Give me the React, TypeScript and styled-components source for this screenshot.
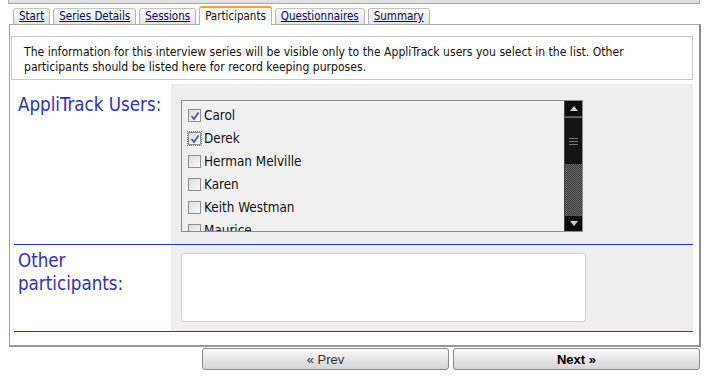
import React from "react";
import styled, { createGlobalStyle } from "styled-components";

const Global = createGlobalStyle`
  html, body { margin: 0; padding: 0; background: #fff; }
  body { font-family: Tahoma, "DejaVu Sans", "Liberation Sans", sans-serif; }
`;

const Page = styled.div`
  width: 708px;
  height: 377px;
  overflow: hidden;
  position: relative;
`;

const TopStrip = styled.div`
  margin: 0 8px 0 8px;
  height: 3px;
  background: linear-gradient(#e8e8e8, #d8d8d8);
  border: 1px solid #aaa;
  border-top: none;
`;

const TabRow = styled.div`
  display: flex;
  align-items: flex-end;
  gap: 3px;
  margin-left: 13px;
  height: 20px;
`;

const Tab = styled.div<{ $active?: boolean }>`
  height: ${(p) => (p.$active ? "19px" : "16px")};
  padding: 0 5px;
  box-sizing: border-box;
  border: 1px solid #b4b4b4;
  border-bottom: none;
  border-top: ${(p) => (p.$active ? "2px solid #f3a32a" : "1px solid #c4c4c4")};
  border-radius: 3px 3px 0 0;
  background: ${(p) => (p.$active ? "#fff" : "linear-gradient(#fafafa, #e6e6e6)")};
  font-family: "DejaVu Sans Condensed", "Liberation Sans", sans-serif;
  font-size: 11.5px;
  line-height: ${(p) => (p.$active ? "17px" : "15px")};
  color: ${(p) => (p.$active ? "#111" : "#0a0a6a")};
  text-decoration: ${(p) => (p.$active ? "none" : "underline")};
  margin-bottom: ${(p) => (p.$active ? "-1px" : "0")};
  position: relative;
  white-space: nowrap;
`;

const Panel = styled.div`
  margin-left: 9px;
  width: 692px;
  box-sizing: border-box;
  border-top: 1px solid #aaa;
  border-left: 1px solid #a0a0a0;
  border-right: 2px solid #8c8c8c;
  border-bottom: 2px solid #999;
  padding: 11px 6px 13px 1px;
`;

const InfoBox = styled.div`
  border: 1px solid #c8c8c8;
  padding: 8px 12px 6px 12px;
  height: 44px;
  box-sizing: border-box;
  font-family: "DejaVu Sans Condensed", "Liberation Sans", sans-serif;
  font-size: 12.1px;
  line-height: 15px;
  color: #111;
  white-space: nowrap;
`;

const Form = styled.div`
  margin: 4px 0 0 3px;
`;

const Row = styled.div<{ $h: number }>`
  display: grid;
  grid-template-columns: 157px 1fr;
  height: ${(p) => p.$h}px;
  border-bottom: 1px solid #3232c4;
`;

const Label = styled.div<{ $pt: number }>`
  font-family: "DejaVu Sans Condensed", "Liberation Sans", sans-serif;
  font-size: 18.6px;
  line-height: 23px;
  color: #3030c8;
  padding: ${(p) => p.$pt}px 0 0 4px;
`;

const Field = styled.div<{ $pt: number }>`
  background: #eeeeee;
  padding: ${(p) => p.$pt}px 0 0 10px;
`;

const ListBox = styled.div`
  width: 402px;
  height: 132px;
  box-sizing: border-box;
  border: 1px solid #8a8a8a;
  background: #f0f0f0;
  display: flex;
`;

const Items = styled.div`
  flex: 1;
  overflow: hidden;
  padding-top: 3px;
`;

const Item = styled.div`
  height: 23px;
  display: flex;
  align-items: center;
  padding-left: 6px;
  gap: 2px;
  font-family: "DejaVu Sans Condensed", "Liberation Sans", sans-serif;
  font-size: 13.4px;
  color: #111;
`;

const Box = styled.span<{ $focus?: boolean }>`
  width: 13px;
  height: 13px;
  flex: none;
  box-sizing: border-box;
  border: 1px solid #8f8f8f;
  background: linear-gradient(135deg, #dcdcdc, #fbfbfb);
  display: inline-flex;
  align-items: center;
  justify-content: center;
  outline: ${(p) => (p.$focus ? "1px dotted #777" : "none")};
  margin-right: 1px;
`;

const ScrollBar = styled.div`
  width: 17px;
  display: flex;
  flex-direction: column;
  background: #111;
  border-left: 1px solid #444;
`;

const ScrollBtn = styled.div<{ $bottom?: boolean }>`
  height: 15px;
  flex: none;
  display: flex;
  align-items: center;
  justify-content: center;
  background: #0c0c0c;
  border-top: ${(p) => (p.$bottom ? "1px solid #555" : "none")};
  border-bottom: ${(p) => (p.$bottom ? "none" : "1px solid #555")};
`;

const Thumb = styled.div`
  height: 46px;
  flex: none;
  background: #141414;
  display: flex;
  flex-direction: column;
  align-items: center;
  justify-content: center;
  gap: 2px;
  border-top: 1px solid #666;
`;

const Grip = styled.span`
  width: 9px;
  height: 1px;
  background: #777;
`;

const Track = styled.div`
  flex: 1;
  background-color: #555;
  background-image: repeating-conic-gradient(#3a3a3a 0% 25%, #6a6a6a 0% 50%);
  background-size: 2px 2px;
`;

const TextArea = styled.div`
  width: 405px;
  height: 69px;
  box-sizing: border-box;
  background: #fff;
  border: 1px solid #cfcfcf;
  border-radius: 3px;
`;

const Buttons = styled.div`
  display: flex;
  gap: 4px;
  margin: 1px 0 0 202px;
`;

const Btn = styled.div<{ $bold?: boolean }>`
  width: 247px;
  height: 22px;
  box-sizing: border-box;
  border: 1px solid #8a8a8a;
  border-radius: 3px;
  background: linear-gradient(#fafafa, #e2e2e2 60%, #d6d6d6);
  display: flex;
  align-items: center;
  justify-content: center;
  font-family: "Liberation Sans", Arial, sans-serif;
  font-size: 13px;
  font-weight: ${(p) => (p.$bold ? 700 : 400)};
  color: ${(p) => (p.$bold ? "#000" : "#333")};
  padding-top: 1px;
`;

const Check = () => (
  <svg width="10" height="10" viewBox="0 0 10 10">
    <path d="M1.5 5 L4 8 L8.5 1.5" stroke="#4a56b8" strokeWidth="1.8" fill="none" />
  </svg>
);

const users = [
  { name: "Carol", checked: true },
  { name: "Derek", checked: true, focus: true },
  { name: "Herman Melville" },
  { name: "Karen" },
  { name: "Keith Westman" },
  { name: "Maurice" },
];

export default function App() {
  return (
    <Page>
      <Global />
      <TopStrip />
      <TabRow>
        <Tab>Start</Tab>
        <Tab>Series Details</Tab>
        <Tab>Sessions</Tab>
        <Tab $active>Participants</Tab>
        <Tab>Questionnaires</Tab>
        <Tab>Summary</Tab>
      </TabRow>
      <Panel>
        <InfoBox>
          The information for this interview series will be visible only to the AppliTrack users you select in the list. Other
          <br />
          participants should be listed here for record keeping purposes.
        </InfoBox>
        <Form>
          <Row $h={160}>
            <Label $pt={9}>AppliTrack Users:</Label>
            <Field $pt={16}>
              <ListBox>
                <Items>
                  {users.map((u) => (
                    <Item key={u.name}>
                      <Box $focus={u.focus}>{u.checked && <Check />}</Box>
                      {u.name}
                    </Item>
                  ))}
                </Items>
                <ScrollBar>
                  <ScrollBtn>
                    <svg width="8" height="5" viewBox="0 0 8 5">
                      <path d="M0 5 L4 0 L8 5Z" fill="#ccc" />
                    </svg>
                  </ScrollBtn>
                  <Thumb>
                    <Grip />
                    <Grip />
                    <Grip />
                  </Thumb>
                  <Track />
                  <ScrollBtn $bottom>
                    <svg width="8" height="5" viewBox="0 0 8 5">
                      <path d="M0 0 L4 5 L8 0Z" fill="#ccc" />
                    </svg>
                  </ScrollBtn>
                </ScrollBar>
              </ListBox>
            </Field>
          </Row>
          <Row $h={86}>
            <Label $pt={4}>
              Other
              <br />
              participants:
            </Label>
            <Field $pt={8}>
              <TextArea />
            </Field>
          </Row>
        </Form>
      </Panel>
      <Buttons>
        <Btn>« Prev</Btn>
        <Btn $bold>Next »</Btn>
      </Buttons>
    </Page>
  );
}
